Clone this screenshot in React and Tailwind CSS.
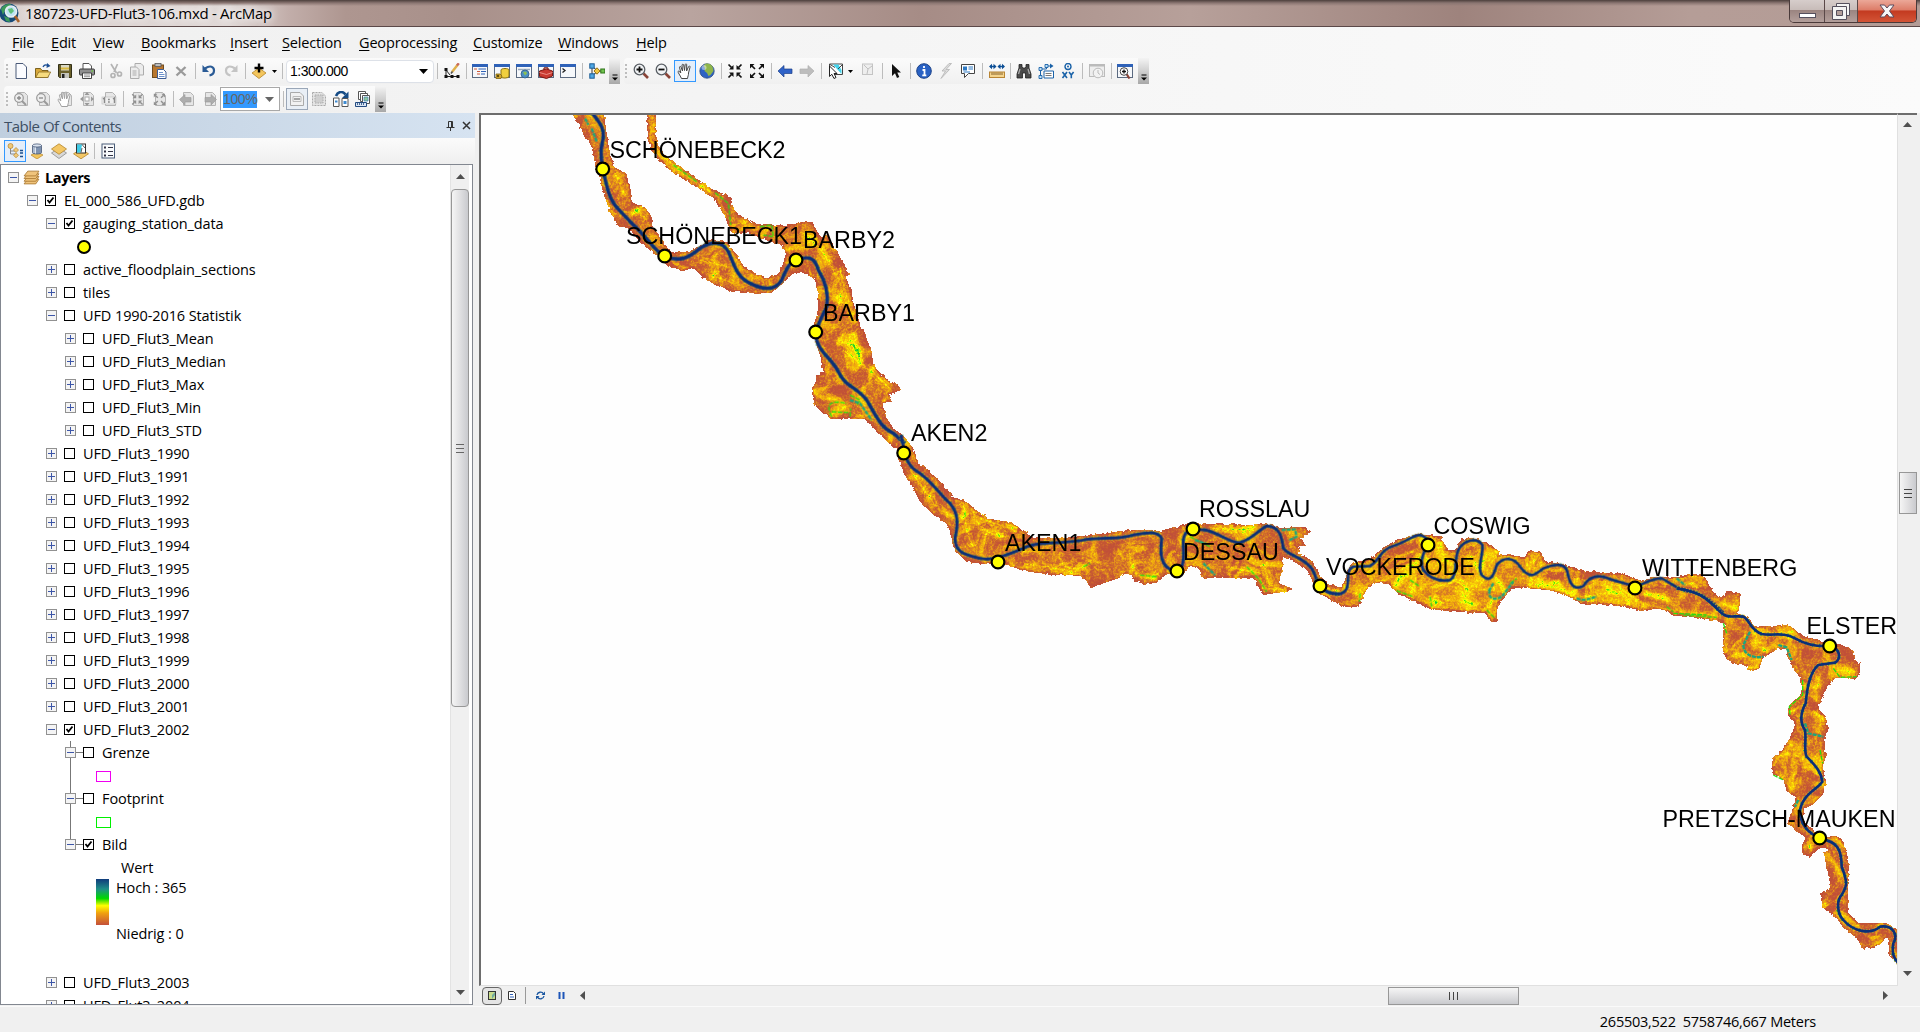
import React from "react";

/* ---------- toolbar icons (16 x 16 grid) ---------- */
const page = <path d="M3 .5h7l3.500 3.500v11.500H3z" fill="#fbfcff" stroke="#4a5a78" />;
const gpage = <path d="M4.500 1.500h7l3 3v10h-10z" fill="#e6e6e6" stroke="#b4b4b4" />;
const lens = (
  <>
    <path d="M10.500 10.500l4.500 4.500" stroke="#8a4438" strokeWidth="2.600" />
    <circle cx="6.500" cy="6.500" r="5.300" fill="#f2f4f6" stroke="#5b6066" strokeWidth="1.300" />
  </>
);
const glens = (
  <>
    {gpage}
    <path d="M9 10l4 4" stroke="#999" strokeWidth="2" />
    <circle cx="6" cy="7" r="4.300" fill="#eee" stroke="#999" strokeWidth="1.200" />
  </>
);
const win = (
  <>
    <rect x=".5" y="1.500" width="15" height="13" fill="#f6f8fb" stroke="#5b6a80" />
    <rect x="0" y="1" width="16" height="3" fill="#2f62b8" />
  </>
);
const arrowsIn = (c) => (
  <g stroke={c} fill={c} strokeWidth="1.700">
    <path d="M1.500 1.500l3 3M14.500 1.500l-3 3M1.500 14.500l3-3M14.500 14.500l-3-3" />
    <path d="M6.500 2V6.500H2zM9.500 2V6.500h4.500zM6.500 14V9.500H2zM9.500 14V9.500h4.500z" stroke="none" />
  </g>
);
const arrowsOut = (c) => (
  <g stroke={c} fill={c} strokeWidth="1.700">
    <path d="M3 3l3 3M13 3l-3 3M3 13l3-3M13 13l-3-3" />
    <path d="M1 5.500V1h4.500zM15 5.500V1h-4.500zM1 10.500v4.500h4.500zM15 10.500v4.500h-4.500z" stroke="none" />
  </g>
);
const hand = (c) => (
  <path
    d="M4.500 15.500C3 12 .8 9.500 1 8.500c.6-.8 1.600 0 2.800 1.500L2.500 4.200c.2-1 1.300-.9 1.600 0L5.500 8 5 2c.2-1 1.500-1 1.700 0l.8 5.500L8.200 1.500c.3-1 1.500-.8 1.500.2L9.600 8l2-4.500c.5-.9 1.700-.4 1.400.7L11.500 10c.2 2-.8 3.500-1 5.500z"
    fill="#fff"
    stroke={c}
  />
);
const globe = (
  <>
    <circle cx="8" cy="8" r="7.200" fill="#2e63c4" stroke="#2a4a80" strokeWidth=".8" />
    <path d="M6 1c3-1 6 0 7.500 2.500L14.500 8l-3 4-2 1L8 10 5.500 8 6 5 4.500 3z" fill="#8fb54a" />
    <circle cx="5" cy="4.500" r="2.500" fill="#fff" opacity=".45" />
  </>
);
const diamond = <path d="M8 5l7 5-7 5.500L1 10z" fill="#f3c55c" stroke="#b5852a" strokeWidth=".8" />;

const ICONS = {
  new: page,
  open: (
    <>
      <path d="M.5 14.500v-9h5l1.500 2h6v7z" fill="#d9a93c" stroke="#7d6320" />
      <path d="M.7 14.500l3-5.500h12l-3 5.500z" fill="#f8dc7e" stroke="#8a6c22" strokeWidth=".8" />
      <path d="M8 4c1-2 3-2.500 5-1.500" fill="none" stroke="#1a4d93" strokeWidth="1.300" />
      <path d="M12 0l3.500 3-4 2z" fill="#1a4d93" />
    </>
  ),
  save: (
    <>
      <path d="M1.500 1.500h13v13h-12l-1-1z" fill="#6a602a" stroke="#333018" />
      <rect x="4" y="2" width="8" height="5.500" fill="#d9d8c5" />
      <path d="M4 5.500h8" stroke="#d8b93e" strokeWidth="2" />
      <rect x="4" y="10" width="8" height="5" fill="#c4c4bc" />
      <rect x="5" y="11" width="2.500" height="4" fill="#222" />
    </>
  ),
  print: (
    <>
      <path d="M4 6V.5h6L12.500 3v3" fill="#fff" stroke="#555" />
      <rect x=".5" y="6" width="15" height="6" rx="1" fill="#8f8f8f" stroke="#3a3a3a" />
      <path d="M3.500 10h9v5.500h-9z" fill="#fff" stroke="#444" />
      <path d="M5 12h6M5 13.700h6" stroke="#777" strokeWidth=".8" />
      <circle cx="13.300" cy="8" r=".9" fill="#6ec04a" />
    </>
  ),
  cut: (
    <g stroke="#b4b4b4" fill="none" strokeWidth="1.700">
      <path d="M4 1l5.500 9M10.500 1L7 9" />
      <circle cx="6" cy="12.500" r="2" />
      <circle cx="12.500" cy="11" r="2" />
    </g>
  ),
  copy: (
    <g fill="#ececec" stroke="#acacac">
      <path d="M6 .5h6l2.500 2.500v9H6z" />
      <path d="M1.500 4h6L10 6.500v9H1.500z" />
      <path d="M3.500 8h4M3.500 10h4M3.500 12h4" />
    </g>
  ),
  paste: (
    <>
      <rect x="1.500" y="2" width="11" height="12.500" fill="#b8772f" stroke="#6f4b1d" />
      <rect x="4" y=".5" width="6" height="3" fill="#bbb" stroke="#555" strokeWidth=".8" />
      <path d="M6.500 6.500h6L15 9v6.500H6.500z" fill="#fff" stroke="#3d5d96" />
      <path d="M8 9.500h4M8 11.500h5.500M8 13.500h5.500" stroke="#5c86c7" strokeWidth=".9" />
    </>
  ),
  del: <path d="M3.500 4l9 8.500M12.500 4l-9 8.500" stroke="#9a9a9a" strokeWidth="2.400" />,
  undo: (
    <>
      <path d="M4 5.500C9 2 13 3.500 13 7.500c0 3-2.500 4.500-4.500 5" fill="none" stroke="#2a5b96" strokeWidth="2.200" />
      <path d="M1.500 2v7h6.500z" fill="#2a5b96" />
    </>
  ),
  redo: (
    <>
      <path d="M12 5.500C7 2 3 3.500 3 7.500c0 3 2.500 4.500 4.500 5" fill="none" stroke="#c4c4c4" strokeWidth="2.200" />
      <path d="M14.500 2v7H8z" fill="#c4c4c4" />
    </>
  ),
  add: (
    <>
      {diamond}
      <path d="M8 .5v9M3.500 5h9" stroke="#000" strokeWidth="2.400" />
    </>
  ),
  editor: (
    <>
      <path d="M2 7v6.500h12M2 7l4 5" stroke="#222" fill="none" />
      <path d="M.5 5h3v3h-3zM.5 12h3v3h-3zM6.500 12h3v3h-3zM12.500 12h3v3h-3z" fill="#111" />
      <path d="M8 9l5.500-7" stroke="#e0b04a" strokeWidth="2.500" />
      <path d="M13 2.500L14.800.3" stroke="#c96a5a" strokeWidth="2.500" />
      <path d="M7 10.500l1.500-2" stroke="#555" strokeWidth="1.500" />
    </>
  ),
  toc: (
    <>
      {win}
      <path d="M2 6h3M5 8.500h3M5 11h3" stroke="#d05a3a" strokeWidth="1.200" />
      <path d="M6.500 6H14M9 8.500h5M9 11h4" stroke="#2f62b8" strokeWidth="1.200" />
    </>
  ),
  catalog: (
    <>
      {win}
      <path d="M7 14V7c0-2 8-2 8 0v6.500c-1 2-7 2-8 .5z" fill="#f0cf3e" stroke="#8c7210" />
      <path d="M2 11h4l2 2-1 2.500H2z" fill="#d5a92e" stroke="#7c6210" strokeWidth=".8" />
      <circle cx="4" cy="13" r="1.200" fill="#5a480c" />
    </>
  ),
  search: (
    <>
      {win}
      <path d="M2 6.500h12" stroke="#9ab" strokeWidth="1.500" />
      <circle cx="9" cy="11" r="4" fill="#4d8fc4" stroke="#2b5a86" strokeWidth=".8" />
      <path d="M7 9l3-.5 1 2-2 2z" fill="#8cc152" />
    </>
  ),
  toolbox: (
    <>
      {win}
      <path d="M1.500 8l7-2 6 2v5l-6 2.500-7-2z" fill="#c93a30" stroke="#7a1812" />
      <path d="M5.500 6.500l1-1.700h3l1 1.500" fill="none" stroke="#7a1812" strokeWidth="1.200" />
      <path d="M1.500 9.500l7 2 6-2" fill="none" stroke="#f2a59c" strokeWidth=".8" />
    </>
  ),
  python: (
    <>
      {win}
      <path d="M2.500 5.500L5 7.500l-2.500 2" fill="none" stroke="#222" strokeWidth="1.300" />
    </>
  ),
  model: (
    <>
      <path d="M3 4v8M3 3.500l6 4.500-6 5" fill="none" stroke="#333" />
      <path d="M9 8h4" stroke="#333" />
      <rect x=".8" y=".8" width="4.400" height="4.400" fill="#4fa9e6" stroke="#1c5c94" />
      <rect x=".8" y="10.800" width="4.400" height="4.400" fill="#4fa9e6" stroke="#1c5c94" />
      <path d="M8 4.800L11 8l-3 3.200L5 8z" fill="#f2c63c" stroke="#9a7412" />
      <rect x="11.800" y="6" width="4" height="4" fill="#6fc24e" stroke="#2f7418" />
    </>
  ),
  zoomin: (
    <>
      {lens}
      <path d="M6.500 3.500v6M3.500 6.500h6" stroke="#111" strokeWidth="1.800" />
    </>
  ),
  zoomout: (
    <>
      {lens}
      <path d="M3.500 6.500h6" stroke="#111" strokeWidth="1.800" />
    </>
  ),
  pan: hand("#444"),
  globe,
  fixin: arrowsIn("#111"),
  fixout: arrowsOut("#111"),
  back: <path d="M1 8l6-5.500V6h8v4.500H7V14z" fill="#2f62c8" stroke="#1d3f88" strokeWidth=".7" />,
  fwd: <path d="M15 8L9 2.500V6H1v4.500h8V14z" fill="#bdbdbd" stroke="#b0b0b0" strokeWidth=".7" />,
  select: (
    <>
      <path d="M2.500 1h13v10.500h-13z" fill="#fff" stroke="#444" />
      <path d="M6 1.500l4 4.500 4.500 5V7l-3-5.500z" fill="#43d5ee" />
      <path d="M15 2l-4 4M3 1.500l5 3" stroke="#444" />
      <path d="M2.500 3v10.500l2.300-2.200L7 15.500l2-1-2-4h3z" fill="#fff" stroke="#222" />
    </>
  ),
  clear: (
    <>
      <rect x="2.500" y="1" width="10" height="10.500" fill="#eee" stroke="#c4c4c4" />
      <path d="M4 2l4 4 4-3M8 6l-1 5" stroke="#c0c0c0" fill="none" />
    </>
  ),
  arrow: <path d="M4 1v12l3-2.800L9 15l2.300-1-2-4.500H13z" fill="#111" />,
  info: (
    <>
      <circle cx="8" cy="8" r="7.300" fill="#2a62c4" stroke="#1c4288" />
      <path d="M8 3v2M6.500 7H8.500v5M6.300 12.300h4" stroke="#fff" strokeWidth="1.800" fill="none" />
    </>
  ),
  bolt: <path d="M11 .5L4 8h3.500L3 15.500l8.500-9H8L13.500.5z" fill="#dcdcdc" stroke="#b4b4b4" strokeWidth=".8" />,
  popup: (
    <>
      <path d="M1.500 1.500h13v9h-6l-4 4v-4h-3z" fill="#fff" stroke="#444" />
      <rect x="3" y="3.500" width="4" height="4" fill="#2f7ac4" />
      <path d="M8.500 4H13M8.500 6H13M3.500 9H10" stroke="#2f7ac4" />
    </>
  ),
  measure: (
    <>
      <path d="M1 3.500h5.500M9.500 3.500H15" stroke="#0d4f96" strokeWidth="1.500" />
      <path d="M0 3.500L3 .8v5.400zM7.500 3.500l-3-2.700v5.400zM8.500 3.500l3-2.700v5.400zM16 3.500l-3-2.700v5.400z" fill="#0d4f96" />
      <rect x=".5" y="9" width="15" height="5.500" fill="#f5d48c" stroke="#b98534" />
      <path d="M3 9.500v2.500M5 9.500v2.500M7 9.500v2.500M9 9.500v2.500M11 9.500v2.500M13 9.500v2.500" stroke="#6b4413" strokeWidth=".8" />
    </>
  ),
  find: (
    <>
      <path d="M3 1.500h3V4l1 1h2l1-1V1.500h3V5l2 6v4h-5.500v-5h-3v5H1v-4l2-6z" fill="#4a4a4a" stroke="#222" strokeWidth=".8" />
      <path d="M4 6l-1.500 5M12 6l1.500 5" stroke="#aaa" strokeWidth="1.300" />
    </>
  ),
  route: (
    <>
      <path d="M2.500 14V6h6V3h5" fill="none" stroke="#1a62a8" />
      <path d="M12 .5l3.500 2.500-3.500 2.500z" fill="#1a62a8" />
      <path d="M1 4.500h3v3H1zM1 12.500h3v3H1zM7 1.500h3v3H7z" fill="#bfe0f7" stroke="#1a62a8" strokeWidth=".9" />
      <path d="M6 8h9.500v7H6z" fill="#fff" stroke="#1a62a8" />
      <path d="M7.500 10.500h6M7.500 12.500h6" stroke="#777" />
    </>
  ),
  xy: (
    <>
      <circle cx="8" cy="3.500" r="3" fill="none" stroke="#1a62a8" strokeWidth="1.400" />
      <circle cx="8" cy="3.500" r="1" fill="#1a62a8" />
      <path d="M2.500 9l4.500 6M7 9l-4.500 6M9 9l2.300 3L13.600 9M11.300 12v3.300" stroke="#1a62a8" strokeWidth="1.600" fill="none" />
    </>
  ),
  time: (
    <>
      <rect x=".5" y="1.500" width="15" height="12" fill="#eee" stroke="#bbb" />
      <path d="M0 2.500h16" stroke="#bbb" strokeWidth="2" />
      <circle cx="9" cy="10" r="4.800" fill="#f2f2f2" stroke="#bbb" />
      <path d="M9 7v3l2 1.500" stroke="#bbb" fill="none" />
    </>
  ),
  viewer: (
    <>
      {win}
      <path d="M9.500 11l3 4.500" stroke="#8a4438" strokeWidth="2.200" />
      <circle cx="7" cy="8.500" r="3.800" fill="#fff" stroke="#444" />
      <path d="M7 6.500v4M5 8.500h4" stroke="#111" strokeWidth="1.300" />
    </>
  ),
  gzin: (
    <>
      {glens}
      <path d="M6 5v4M4 7h4" stroke="#888" strokeWidth="1.300" />
    </>
  ),
  gzout: (
    <>
      {glens}
      <path d="M4 7h4" stroke="#888" strokeWidth="1.300" />
    </>
  ),
  gpan: (
    <>
      {gpage}
      {hand("#a0a0a0")}
    </>
  ),
  gfull: (
    <>
      {gpage}
      <path d="M8 1l2.500 3h-5zM8 15l2.500-3h-5zM1 8l3-2.500v5zM15 8l-3-2.500v5z" fill="#999" />
      <rect x="6" y="6" width="4" height="4" fill="#fff" stroke="#aaa" />
    </>
  ),
  g11: (
    <>
      {gpage}
      <rect x="1" y="6" width="14" height="7" fill="#eee" stroke="#bbb" strokeWidth=".6" />
      <path d="M2 8l1.500-1v5M12 8l1.500-1v5" stroke="#8a8a8a" fill="none" strokeWidth="1.500" />
      <path d="M7 8.500h1.800M7 11h1.800" stroke="#8a8a8a" strokeWidth="1.500" />
    </>
  ),
  gin: (
    <>
      {gpage}
      <g transform="translate(2 2) scale(.8)">{arrowsIn("#909090")}</g>
    </>
  ),
  gout: (
    <>
      {gpage}
      <g transform="translate(2 2) scale(.8)">{arrowsOut("#909090")}</g>
    </>
  ),
  gback: (
    <>
      {gpage}
      <path d="M.5 8.500l5.500-5V6.500h6v4.500H6v3z" fill="#adadad" stroke="#999" strokeWidth=".6" />
    </>
  ),
  gfwd: (
    <>
      {gpage}
      <path d="M15.500 8.500l-5.500-5V6.500H4v4.500h6v3z" fill="#adadad" stroke="#999" strokeWidth=".6" />
    </>
  ),
  draft: (
    <>
      <path d="M1.500 1.500h9.500l3.500 3.500v9.500h-13z" fill="#f1f1f1" stroke="#aaa" />
      <path d="M4 5.500h8v5H4z" fill="none" stroke="#bbb" />
      <path d="M5 8h6" stroke="#888" strokeWidth="1.500" />
    </>
  ),
  focus: (
    <>
      <path d="M1.500 1.500h9.500l3.500 3.500v9.500h-13z" fill="#e4e4e4" stroke="#aaa" strokeDasharray="2 1" />
      <path d="M4 4h8v8H4z" fill="#cfcfcf" stroke="#aaa" strokeDasharray="1.500 1" />
    </>
  ),
  layout: (
    <>
      <path d="M3 5C5 0 10 0 12.500 3.500" fill="none" stroke="#164c86" strokeWidth="2.600" />
      <path d="M15.500.5v6.500H9z" fill="#164c86" />
      <path d="M.5 7h5.500v8.500H.5zM9 7.500h6v8H9z" fill="#fff" stroke="#555" />
      <path d="M2 9.500h2.500v2H2z" fill="#3f8bd0" />
      <path d="M10.500 10h3v3h-3z" fill="#3f8bd0" />
    </>
  ),
  ddp: (
    <>
      <path d="M3.500.5h7v8h-7z" fill="#fff" stroke="#555" />
      <path d="M5.500 2.500h7v8h-7z" fill="#fff" stroke="#555" />
      <path d="M7.500 4.500h7v8h-7z" fill="#fff" stroke="#555" />
      <path d="M9 6h4v4H9z" fill="#8ec79b" stroke="#3f7fb0" strokeWidth=".7" />
      <path d="M.5 11.500h11v4H.5z" fill="#d9e4f2" stroke="#234a80" />
      <path d="M2.500 12v2M4.500 12v2M6.500 12v2M8.500 12v2" stroke="#234a80" strokeWidth=".8" />
    </>
  ),
  tOrder: (
    <>
      <path d="M3.500 4v7h6M3.500 8h5" fill="none" stroke="#888" />
      <circle cx="3.500" cy="3" r="2.500" fill="#f0c878" stroke="#b5852a" strokeWidth=".7" />
      <path d="M9 4.500L11.500 7 9 9.500 6.500 7zM9 9.800l2.500 2.500L9 14.800l-2.500-2.500z" fill="#f0c878" stroke="#b5852a" strokeWidth=".7" />
      <path d="M13 7.500h3M13 10h3M13 13.500h3" stroke="#1d4f8c" strokeWidth="1.400" />
    </>
  ),
  tSource: (
    <>
      <path d="M8 9l6 3-6 4-6-4z" fill="#f3c55c" stroke="#b5852a" strokeWidth=".7" />
      <path d="M3.500 2.500v7c0 2 9 2 9 0v-7z" fill="#7f93b0" stroke="#4a5b78" strokeWidth=".8" />
      <path d="M5 4v6M6.500 4v6.500" stroke="#dfe7f2" />
      <ellipse cx="8" cy="2.500" rx="4.500" ry="1.600" fill="#dbe4f0" stroke="#4a5b78" strokeWidth=".8" />
    </>
  ),
  tVis: (
    <>
      <path d="M8 5l7.500 5L8 15.500.5 10z" fill="#d8d8d8" stroke="#8a8a8a" strokeWidth=".8" />
      <path d="M8 .8L15.500 6 8 11.300.5 6z" fill="#f4c765" stroke="#b5852a" strokeWidth=".8" />
    </>
  ),
  tSel: (
    <>
      <path d="M8 6l7.500 4.800L8 15.800.5 10.800z" fill="#f4c765" stroke="#b5852a" strokeWidth=".8" />
      <rect x="3.500" y="1" width="9" height="9" fill="#fff" stroke="#333" />
      <path d="M4 1.500h5L7.500 9.500H4z" fill="#3ecbe6" />
      <path d="M9 1.500l3 3.500M9 5l-1 4.500" stroke="#333" strokeWidth=".8" />
    </>
  ),
  tOpt: (
    <>
      <rect x="2" y="1" width="12.500" height="14" fill="#f8fafc" stroke="#4a5d78" />
      <path d="M8 4.500h5M8 8.500h5M8 12.500h5" stroke="#334" strokeWidth="1.200" />
      <path d="M4 3.500h2v2H4zM4 7.500h2v2H4zM4 11.500h2v2H4z" fill="#334" />
    </>
  ),
  layers: (
    <g fill="#f0c47c" stroke="#a9772f" strokeWidth=".8">
      <path d="M1 14l3.500-4.500H15L12 14z" />
      <path d="M1 11.500L4.500 7H15l-3 4.500z" />
      <path d="M1 9l3.500-4.500H15L12 9z" />
      <path d="M1 6.500L4.500 2H15l-3 4.500z" />
    </g>
  ),
};

const Svg = ({ name, className = "h-4 w-4" }) => (
  <svg viewBox="0 0 16 16" className={className}>
    {ICONS[name]}
  </svg>
);

const Icon = ({ name, active, framed }) => (
  <div
    className={
      "flex h-[22px] w-[22px] shrink-0 items-center justify-center " +
      (active ? "border border-[#3399ff] bg-[#e4eefa]" : framed ? "border border-[#9aa7b8] bg-[#e9eff6]" : "")
    }
  >
    <Svg name={name} className="h-4 w-4 shrink-0" />
  </div>
);

const SEP_W = { 5: "w-[5px]", 6: "w-[6px]", 7: "w-[7px]" };
const Sep = ({ w = 6 }) => (
  <div className={"flex shrink-0 justify-center " + SEP_W[w]}>
    <div className="h-4 w-px bg-[#bcbcbc]" />
  </div>
);
const Grip = ({ className }) => (
  <div className={"flex shrink-0 flex-col gap-[2px] " + className}>
    {[0, 1, 2, 3].map((i) => (
      <div key={i} className="h-[2px] w-[2px] bg-[#bdbdbd]" />
    ))}
  </div>
);
const Drop = () => (
  <div className="flex w-[9px] shrink-0 justify-center">
    <svg viewBox="0 0 5 3" className="h-[3px] w-[5px]">
      <path d="M0 0h5L2.500 3z" fill="#000" />
    </svg>
  </div>
);
const Overflow = () => (
  <div className="ml-px flex h-[26px] w-[11px] shrink-0 items-end justify-center bg-gradient-to-b from-[#f4f4f4] via-[#d0d0d0] to-[#a8a8a8] pb-[3px]">
    <svg viewBox="0 0 6 7" className="h-[7px] w-[6px]">
      <path d="M.5 1h5" stroke="#000" />
      <path d="M0 3.500h6L3 6.500z" fill="#000" />
    </svg>
  </div>
);
const Icons = ({ names }) => names.split(" ").map((n) => <Icon key={n} name={n} />);

/* ---------- window frame ---------- */
function TitleBar() {
  return (
    <div className="flex h-[27px] shrink-0 items-start justify-between border-b border-[#5b4848] bg-[linear-gradient(180deg,#4c3f3c_0px,#8b7672_3px,transparent_6px),linear-gradient(90deg,#dcd3d1_0%,#e0d8d6_12%,#c2aeaa_15%,#ae9690_18%,#a8908a_24%,#b9a49f_36%,#a68c86_48%,#b7a09a_62%,#9e837d_76%,#b59d97_88%,#b39c96_100%)]">
      <div className="flex h-[26px] items-center gap-[5px]">
        <svg viewBox="0 0 20 22" className="h-[22px] w-5">
          <circle cx="9" cy="11" r="9.500" fill="#174a78" />
          <path d="M1 7c2-4 6-5.500 10-5l-2 4-4 2-2 5zM4 14l5 2 1 4-4-1z" fill="#3d9a5a" />
          <circle cx="11" cy="9.500" r="5.500" fill="#bfe4f4" stroke="#e8eef2" strokeWidth="1.600" />
          <path d="M8 7l4-1 2 3-3 3-2-2z" fill="#5fbf7a" />
          <path d="M15 14l4 6" stroke="#a8632c" strokeWidth="2.600" />
        </svg>
        <span className="text-[15px] leading-none tracking-[-0.31px] text-black [text-shadow:0_0_8px_#fff,0_0_10px_#fff]">
          180723-UFD-Flut3-106.mxd - ArcMap
        </span>
      </div>
      <div className="mr-[3px] flex h-[23px] w-[128px] overflow-hidden rounded-b-[5px] border border-t-0 border-[#4a3a3a]">
        <div className="flex w-[35px] items-end justify-center border-r border-[#5a4848] bg-[linear-gradient(180deg,#d6cdcb_0%,#c8bcb9_44%,#9a8480_46%,#b39f9b_100%)] pb-[4px]">
          <div className="h-[5px] w-[17px] border border-[#55505e] bg-white" />
        </div>
        <div className="flex w-[33px] items-center justify-center border-r border-[#5a4848] bg-[linear-gradient(180deg,#d6cdcb_0%,#c8bcb9_44%,#9a8480_46%,#b39f9b_100%)]">
          <svg viewBox="0 0 18 17" className="h-[17px] w-[18px]">
            <path d="M4.500.5h13v12h-13z" fill="#f4f4f4" stroke="#55505e" />
            <path d="M.5 3.500h14v13H.5z" fill="#f4f4f4" stroke="#55505e" />
            <path d="M4.500 7.500h6v5h-6z" fill="#b39f9b" stroke="#55505e" />
          </svg>
        </div>
        <div className="flex flex-1 items-center justify-center bg-[linear-gradient(180deg,#eba898_0%,#dd7c68_45%,#c33a20_50%,#d35436_100%)]">
          <svg viewBox="0 0 16 14" className="h-[14px] w-4">
            <path d="M1 1h4.500L8 4l2.500-3H15l-4.500 6L15 13h-4.500L8 10l-2.500 3H1l4.500-6z" fill="#f6f6f6" stroke="#5b4a5c" />
          </svg>
        </div>
      </div>
    </div>
  );
}

const MENUS = [
  ["File", "w-[39px]"],
  ["Edit", "w-[42px]"],
  ["View", "w-[48px]"],
  ["Bookmarks", "w-[89px]"],
  ["Insert", "w-[52px]"],
  ["Selection", "w-[77px]"],
  ["Geoprocessing", "w-[114px]"],
  ["Customize", "w-[85px]"],
  ["Windows", "w-[78px]"],
  ["Help", "w-[50px]"],
];

function Toolbars() {
  return (
    <div className="shrink-0 bg-gradient-to-r from-[#f0f0f0] to-[#fbfbfb]">
      <div className="flex h-[31px] items-center pl-3 text-[14.500px] tracking-[-0.16px]">
        {MENUS.map(([m, w]) => (
          <span key={m} className={"shrink-0 whitespace-nowrap " + w}>
            <span className="underline decoration-1 underline-offset-2">{m[0]}</span>
            {m.slice(1)}
          </span>
        ))}
      </div>
      <div className="flex h-[26px]">
        <div className="ml-1 flex items-center rounded bg-gradient-to-b from-[#fbfbfb] to-[#f0f0f0]">
          <Grip className="w-[6px] pl-[2px]" />
          <Icons names="new open save print" />
          <Sep />
          <Icons names="cut copy paste del" />
          <Sep w={6} />
          <Icons names="undo redo" />
          <Sep w={6} />
          <Icon name="add" />
          <Drop />
          <Sep />
          <div className="ml-px flex h-[23px] w-[148px] items-center justify-between rounded-sm border border-[#dde1e8] bg-white pl-[3px] pr-[5px] font-['Liberation_Sans',sans-serif] text-[14px] tracking-[-0.5px]">
            <span>1:300.000</span>
            <svg viewBox="0 0 9 5" className="h-[5px] w-[9px]">
              <path d="M0 0h9L4.500 5z" fill="#000" />
            </svg>
          </div>
          <Sep w={7} />
          <Icon name="editor" />
          <Sep />
          <Icons names="toc catalog search toolbox python" />
          <Sep w={7} />
          <Icon name="model" />
          <Overflow />
        </div>
        <div className="ml-1 flex items-center rounded bg-gradient-to-b from-[#fbfbfb] to-[#f0f0f0]">
          <Grip className="w-[6px] pl-[1px]" />
          <Icons names="zoomin zoomout" />
          <Icon name="pan" active />
          <Icon name="globe" />
          <Sep w={6} />
          <Icons names="fixin fixout" />
          <Sep />
          <Icons names="back fwd" />
          <Sep />
          <Icon name="select" />
          <Drop />
          <div className="ml-[2px] flex items-center">
            <Icon name="clear" />
          </div>
          <Sep w={6} />
          <Icon name="arrow" />
          <Sep w={6} />
          <Icons names="info bolt popup" />
          <Sep w={7} />
          <Icon name="measure" />
          <Sep w={5} />
          <Icons names="find route xy" />
          <Sep w={7} />
          <Icon name="time" />
          <Sep w={6} />
          <Icon name="viewer" />
          <div className="pl-px">
            <Overflow />
          </div>
        </div>
      </div>
      <div className="flex h-[29px] items-start pl-1 pt-[2px]">
        <div className="flex h-[26px] items-center rounded bg-gradient-to-b from-[#fbfbfb] to-[#f0f0f0]">
          <Grip className="w-[6px] pl-[2px]" />
          <Icons names="gzin gzout gpan gfull g11" />
          <Sep w={6} />
          <Icons names="gin gout" />
          <Sep />
          <Icons names="gback gfwd" />
          <div className="flex h-[24px] w-[60px] items-center justify-between border border-[#a8a8a8] bg-white pl-[2px] pr-[5px] font-['Liberation_Sans',sans-serif] text-[14px]">
            <span className="bg-[#3399ff] leading-[17px] tracking-[-0.4px] text-[#666]">100%</span>
            <svg viewBox="0 0 9 5" className="h-[5px] w-[9px]">
              <path d="M0 0h9L4.500 5z" fill="#666" />
            </svg>
          </div>
          <Sep w={6} />
          <Icon name="draft" framed />
          <Icons names="focus layout ddp" />
          <Overflow />
        </div>
      </div>
    </div>
  );
}

/* ---------- table of contents ---------- */
const Expander = ({ open }) => (
  <svg viewBox="0 0 11 11" className="mr-[7px] h-[11px] w-[11px] shrink-0">
    <rect x=".5" y=".5" width="10" height="10" fill="#f4f4f4" stroke="#919191" />
    <path d={open ? "M2 5.500h7" : "M2 5.500h7M5.500 2v7"} stroke="#3d56a8" />
  </svg>
);
const Check = ({ on }) => (
  <svg viewBox="0 0 11 11" className="mr-2 h-[11px] w-[11px] shrink-0">
    <rect x=".5" y=".5" width="10" height="10" fill="#fff" stroke="#000" />
    {on && <path d="M2.500 5l2 2.500 4-5" fill="none" stroke="#000" strokeWidth="1.800" />}
  </svg>
);
const INDENT = ["pl-[7px]", "pl-[26px]", "pl-[45px]", "pl-[64px]"];
const Row = ({ lvl, open, on, label }) => (
  <div className={"flex h-[23px] shrink-0 items-center " + INDENT[lvl]}>
    <Expander open={open} />
    <Check on={on} />
    <span className="whitespace-nowrap">{label}</span>
  </div>
);
/* Sub-layer row with the connector lines running through the expander column */
const SubRow = ({ on, label, last }) => (
  <div className="flex h-[23px] shrink-0 items-center pl-[64px]">
    <svg viewBox="0 0 18 23" className="h-[23px] w-[18px] shrink-0">
      <path d={last ? "M5.500 0v11M11 11.500h7" : "M5.500 0v23M11 11.500h7"} stroke="#777" />
      <rect x=".5" y="6.500" width="10" height="10" fill="#f4f4f4" stroke="#919191" />
      <path d="M2 11.500h7" stroke="#3d56a8" />
    </svg>
    <Check on={on} />
    <span>{label}</span>
  </div>
);
const Swatch = ({ className }) => (
  <div className="flex h-[23px] shrink-0 items-center pl-[69px]">
    <div className="h-[23px] w-px bg-[#777]" />
    <div className={"ml-[25px] mt-[2px] h-[11px] w-[15px] border " + className} />
  </div>
);
const YEARS = [1990, 1991, 1992, 1993, 1994, 1995, 1996, 1997, 1998, 1999, 2000, 2001];

const Tri = ({ dir, className = "" }) => {
  const d = { up: "M0 6h9L4.500 1z", down: "M0 1h9L4.500 6z", left: "M7 0v9L2 4.500z", right: "M2 0v9l5-4.500z" }[dir];
  return (
    <svg viewBox="0 0 9 9" className={"h-[9px] w-[9px] shrink-0 " + className}>
      <path d={d} fill="#505050" />
    </svg>
  );
};

function Contents() {
  return (
    <div className="flex w-[475px] shrink-0 flex-col">
      <div className="flex h-[25px] shrink-0 items-center justify-between bg-gradient-to-r from-[#c0cfdf] to-[#d6e3f1] pl-1 pr-1 pt-[2px] text-[15px] text-[#3d4f63]">
        <span className="tracking-[-0.5px]">Table Of Contents</span>
        <div className="flex items-center gap-[7px] pb-[2px]">
          <svg viewBox="0 0 9 10" className="h-[10px] w-[9px]">
            <path d="M2.500 6V.5h4V6M5.500 1v5M.5 6.500h8M4.500 7v3" fill="none" stroke="#333" />
          </svg>
          <svg viewBox="0 0 9 9" className="h-[9px] w-[9px]">
            <path d="M1 1l7 7M8 1L1 8" stroke="#333" strokeWidth="1.500" />
          </svg>
        </div>
      </div>
      <div className="flex h-[26px] shrink-0 items-center bg-gradient-to-b from-[#fbfbfb] to-[#efefef] pl-1">
        <Icon name="tOrder" active />
        <Icons names="tSource tVis tSel" />
        <Sep w={5} />
        <Icon name="tOpt" />
      </div>
      <div className="mb-[1px] flex min-h-0 w-[473px] flex-1 border border-[#828790] bg-white">
        <div className="flex min-w-0 flex-1 flex-col overflow-hidden pt-px text-[14.500px] tracking-[-0.1px]">
          <div className="flex h-[23px] shrink-0 items-center pl-[7px]">
            <Expander open />
            <Svg name="layers" className="-ml-[3px] mr-[5px] h-[17px] w-[17px]" />
            <span className="font-bold tracking-[-0.4px]">Layers</span>
          </div>
          <Row lvl={1} open on label="EL_000_586_UFD.gdb" />
          <Row lvl={2} open on label="gauging_station_data" />
          <div className="flex h-[23px] shrink-0 items-center pl-[76px]">
            <div className="h-[14px] w-[14px] rounded-full border-2 border-black bg-[#ffff00]" />
          </div>
          <Row lvl={2} label="active_floodplain_sections" />
          <Row lvl={2} label="tiles" />
          <Row lvl={2} open label="UFD 1990-2016 Statistik" />
          {["Mean", "Median", "Max", "Min", "STD"].map((s) => (
            <Row key={s} lvl={3} label={"UFD_Flut3_" + s} />
          ))}
          {YEARS.map((y) => (
            <Row key={y} lvl={2} label={"UFD_Flut3_" + y} />
          ))}
          <Row lvl={2} open on label="UFD_Flut3_2002" />
          <SubRow label="Grenze" />
          <Swatch className="border-[#f000f0]" />
          <SubRow label="Footprint" />
          <Swatch className="border-[#00f000]" />
          <SubRow on last label="Bild" />
          <div className="flex h-[23px] shrink-0 items-center pl-[120px]">Wert</div>
          <div className="flex h-[92px] shrink-0 pl-[95px]">
            <div className="h-[46px] w-[13px] bg-[linear-gradient(180deg,#103c7c_0%,#1f8f88_22%,#00d800_42%,#ffff00_58%,#f0a010_74%,#c4503a_100%)]" />
            <div className="ml-[7px] flex flex-col gap-[23px]">
              <span className="leading-[18px]">Hoch : 365</span>
              <span className="mt-[5px] leading-[18px]">Niedrig : 0</span>
            </div>
          </div>
          <Row lvl={2} label="UFD_Flut3_2003" />
          <Row lvl={2} label="UFD_Flut3_2004" />
        </div>
        <div className="mr-[3px] flex w-[19px] shrink-0 flex-col items-center border-l border-[#e3e3e3] bg-[#f0f0f0]">
          <div className="flex h-[24px] items-center">
            <Tri dir="up" />
          </div>
          <div className="flex h-[518px] w-[18px] flex-col items-center justify-center gap-[3px] rounded-sm border border-[#979797] bg-gradient-to-r from-[#f5f5f5] via-[#e0e0e2] to-[#c9cace]">
            <div className="h-px w-2 bg-[#666]" />
            <div className="h-px w-2 bg-[#666]" />
            <div className="h-px w-2 bg-[#666]" />
          </div>
          <div className="mt-auto flex h-[22px] items-center">
            <Tri dir="down" />
          </div>
        </div>
      </div>
    </div>
  );
}

/* ---------- map ---------- */
/* Each section is digitised on its own grid: three units per map pixel.
   `tone` is the base level of the raster there; `low` marks rarely flooded ground. */
const SECTIONS = [
  {
    t: "translate(560 110) scale(.33333)",
    tone: "#2c2c2c",
    w: 10.5,
    land:
      "38,10 60,45 75,75 95,105 105,145 120,195 130,240 150,300 178,350 200,348 225,375 260,410 300,440 320,462 365,482 400,472 430,500 470,525 515,543 575,548 635,546 665,520 695,490 730,485 765,505 775,540 778,600 765,640 770,700 785,745 793,785 775,805 757,840 765,880 785,905 820,925 865,922 915,925 935,945 970,980 1000,1010 1040,1010 1025,975 1000,960 975,920 965,880 990,870 985,850 1020,840 1005,822 985,815 940,770 930,715 900,650 885,600 870,540 850,490 825,440 800,400 775,375 755,337 720,340 680,350 630,345 590,345 550,325 520,305 510,265 495,255 460,243 420,215 370,180 320,145 290,110 285,60 285,10 265,10 263,80 280,125 320,170 370,205 430,240 460,262 480,290 500,325 515,365 560,365 600,380 640,395 665,400 680,430 668,470 655,495 620,505 580,490 545,465 525,430 500,400 455,390 420,410 385,428 335,430 305,395 275,350 272,320 255,295 215,280 210,240 195,190 165,175 150,140 140,90 130,10",
    river:
      "M98,10 C115,35 132,50 130,80 L123,120 C123,160 130,190 145,245 C160,290 175,295 215,340 C265,385 280,420 315,440 C360,455 385,445 420,415 C450,395 485,390 505,425 C525,470 530,500 570,520 C620,545 650,535 665,510 C680,475 690,455 708,450 C750,435 765,445 775,480 C800,520 805,560 800,590 C785,625 765,650 770,690 C780,730 815,745 835,785 C855,830 890,830 920,870 C950,920 960,950 1000,970 L1035,1000",
    bright:
      "M275,20 L272,90 C320,160 380,200 450,245 M165,190 C190,230 180,250 200,260 M225,300 L260,330 M720,365 C760,390 790,420 820,480 C850,520 850,560 830,600 M840,470 C850,540 870,580 885,640 M830,700 C880,690 900,720 900,760 M850,720 L940,790 L985,830 M420,450 L500,470 M440,490 L520,520",
    low: "M60,20 L110,100 L120,190 M140,230 L190,345 M330,465 L400,440 M770,840 L860,840 M780,790 L790,880 M490,270 L540,340 M790,380 L860,500 M900,660 L925,760",
    green:
      "M340,165 L410,215 M465,248 L505,280 L512,345 M600,350 L635,345 L640,380 L610,375 M815,920 C795,880 810,870 860,880 M870,920 L872,895 M870,855 L900,870 L890,885 M815,905 L870,908",
    teal: "M75,25 L85,45 M95,55 L110,95 M870,870 L900,880 L935,930",
  },
  {
    t: "translate(900 420) scale(.33333)",
    tone: "#282828",
    w: 9,
    land:
      "-5,40 15,55 40,90 55,135 95,170 150,235 190,240 230,275 270,300 330,308 365,330 400,355 480,358 590,345 690,332 780,335 860,315 905,315 960,312 1040,318 1100,312 1140,325 1215,322 1228,335 1200,355 1215,375 1190,378 1190,400 1235,425 1260,470 1285,495 1325,505 1325,548 1270,518 1240,485 1225,450 1170,415 1145,410 1148,440 1140,460 1135,490 1170,508 1140,515 1090,522 1080,505 1060,470 905,470 900,445 870,435 850,460 800,460 770,485 730,492 700,475 685,455 650,475 600,490 575,502 562,485 540,465 450,462 370,450 340,440 300,425 250,430 200,422 165,390 150,330 145,315 100,280 60,240 40,200 15,160 -5,110",
    river:
      "M3,45 C15,110 20,130 45,150 C90,175 120,225 150,250 C175,280 175,310 165,355 C165,400 200,405 240,415 C280,425 330,400 370,385 C420,360 490,375 560,358 C620,350 650,360 700,345 C750,335 775,335 785,355 C780,400 780,440 820,452 C850,450 852,430 850,380 C845,330 870,325 915,330 C960,340 990,370 1020,368 C1060,355 1075,330 1100,318 C1140,320 1145,350 1150,385 C1170,410 1200,405 1235,445 C1250,470 1250,490 1262,500 C1280,520 1300,522 1325,522",
    bright:
      "M190,250 C200,290 190,330 220,380 M220,275 C230,320 270,350 320,350 M240,290 C280,320 330,315 350,335 M30,150 L110,260 M480,395 C470,440 530,470 570,420 M690,400 C690,470 750,485 775,460 M695,430 C700,475 750,480 770,470 M370,430 L520,455 M930,325 L1060,330 M980,440 L1080,460 M1090,430 L1110,500 M1085,505 L1160,508 M360,400 L420,390",
    low: "M60,140 L150,235 M590,400 L680,370 M700,370 L770,360 M720,400 L750,430 M800,350 L850,330 M800,400 L840,390 M900,450 L950,460 M1160,345 L1190,400 M1000,460 L1020,400 M570,490 L620,470",
    green: "M1040,440 L1075,475 L1100,515 M720,465 L770,470 M870,350 L930,380 M550,440 L570,430",
    teal: "M1145,330 L1185,328 L1190,350 L1165,362 M885,360 L920,372 M910,430 L945,465",
  },
  {
    t: "translate(1280 500) scale(.33333)",
    tone: "#525252",
    w: 8,
    land:
      "150,262 180,268 198,240 205,215 220,190 270,180 310,145 350,122 415,103 480,112 500,150 525,155 545,120 580,115 620,130 655,155 655,168 690,165 735,175 745,155 780,155 790,185 850,195 890,210 940,228 1020,220 1060,235 1085,245 1130,232 1190,235 1225,225 1260,225 1280,245 1290,270 1330,300 1330,362 1250,352 1190,345 1140,320 1090,332 1040,318 960,310 900,308 860,285 810,268 740,262 700,260 670,290 650,320 648,360 635,362 615,335 560,335 450,325 400,300 355,280 325,248 280,245 250,275 235,318 190,318 150,295 110,275 120,250",
    river:
      "M105,240 L120,262 C150,285 190,290 200,265 C210,240 195,210 220,200 L270,198 C300,180 300,150 340,138 C380,125 400,105 420,105 C445,115 445,120 440,140 C425,170 420,190 430,210 C450,235 480,245 510,240 C535,225 520,185 535,150 C550,120 590,110 607,135 C610,170 590,200 605,225 C630,250 640,230 650,195 C670,170 700,170 720,200 C750,240 765,225 790,205 C830,190 855,190 862,215 C870,260 885,270 910,258 C930,225 960,225 985,235 C1010,245 1040,250 1064,260 C1090,255 1110,235 1145,235 C1175,250 1200,275 1240,275 C1280,290 1300,310 1330,338",
    bright:
      "M470,130 C480,170 470,190 500,220 M480,125 L490,170 M240,300 C250,250 280,240 330,240 M350,230 L440,300 L560,320 M380,270 L460,310 M420,250 L600,270 M460,290 L600,315 M540,330 L620,300 M570,150 C560,200 550,230 570,290 M620,320 L640,350 M640,150 L630,200 M680,230 L840,250 M740,250 L860,265 M900,290 L1060,270 M960,300 L1100,300 M1090,280 L1200,320 M1180,335 L1320,345 M1230,235 L1280,300 M760,165 L765,190",
    low: "M150,285 L200,295 M220,230 L200,300 M230,205 L260,250 M300,200 L330,160 L410,130 M310,210 L400,170 M560,160 L590,150 M800,225 L850,230 M880,220 L1020,235 M900,280 L930,270 M1210,325 L1240,315 M1130,260 L1170,270",
    green:
      "M390,240 L420,260 M350,272 L400,290 M620,330 L645,355 M690,250 L710,235 M450,290 L455,320 M240,280 L238,305 M1210,345 L1310,352 M1160,320 L1180,335",
    teal: "M630,270 C620,290 640,305 665,290 L700,245 M640,250 L625,275 M890,295 C910,305 930,295 950,290 M1190,235 L1215,255",
  },
  {
    t: "translate(1640 590) scale(.33333)",
    tone: "#323232",
    w: 8,
    land:
      "120,-5 0,-5 0,60 60,50 100,72 180,78 220,80 258,100 250,140 258,200 280,220 310,218 330,238 355,235 365,205 410,175 440,175 450,215 480,260 490,310 450,345 445,375 468,400 455,440 430,480 405,500 397,545 435,570 440,600 470,620 458,660 445,700 475,725 500,740 487,770 490,790 510,798 530,775 555,770 575,780 580,830 572,900 545,910 548,950 590,980 610,1010 650,1040 670,1075 715,1065 745,1035 750,1095 780,1122 780,1025 735,1000 690,1003 650,1000 620,965 620,900 625,850 620,790 605,750 585,738 555,745 510,715 485,690 490,655 520,640 552,605 555,570 545,530 555,500 550,450 562,410 550,375 530,360 540,330 560,290 580,265 600,260 650,265 658,240 658,220 640,210 640,185 600,165 550,155 490,140 450,110 420,105 400,112 340,110 325,85 290,70 298,40 298,10 265,5 240,30 210,-5",
    river:
      "M110,-5 C180,5 200,25 235,60 C260,90 280,75 310,80 C330,90 330,120 365,132 C400,138 430,125 465,145 C500,165 540,170 570,168 C600,175 605,205 585,218 L535,225 C505,250 500,310 497,340 C480,370 480,400 495,420 C500,450 490,480 500,500 C530,530 545,550 547,575 C530,600 490,610 480,660 C480,710 510,730 540,745 C590,755 605,775 605,830 C625,880 620,890 605,915 C590,930 590,970 610,990 C640,1025 690,1035 720,1010 C760,1005 775,1035 760,1060 C755,1090 760,1105 780,1125",
    bright:
      "M10,40 L90,60 L220,75 M10,10 L120,40 M250,40 L290,55 M345,125 C400,130 440,120 460,150 M330,150 C350,200 390,180 430,160 M540,260 C530,290 520,310 535,330 M520,375 C540,370 550,400 535,430 M400,530 C410,480 470,490 490,510 M405,545 C440,570 460,590 450,610 M455,450 L440,490 M590,240 L655,245 M460,350 L450,370 M490,770 L520,760 M320,235 L355,232 M260,110 L255,190",
    low: "M280,130 L310,140 M470,190 L560,195 M600,175 L640,205 M460,530 L530,570 M500,460 L520,500 M500,600 L540,610 M510,350 L535,350 M560,780 L600,960 M560,910 L580,960 M590,800 L600,900 M620,1000 L680,1060 M660,1030 L740,1020 M610,790 L612,850 M460,680 L480,700 M770,1040 L770,1100",
    green: "M250,100 L260,130 M488,270 L488,315 L448,350 L450,375 M400,555 L430,570 M540,480 L548,520 M580,235 L600,262 L650,260 M590,960 L605,990 M100,70 L200,75",
    teal: "M330,125 L310,165 C310,200 350,205 370,200 M415,165 L440,172 L455,210 M495,400 L505,430 L550,440 M475,630 L465,650",
  },
];

const STATIONS = [
  ["SCHÖNEBECK2", 602.7, 169, 609.5, 158],
  ["SCHÖNEBECK1", 664.7, 256, 626, 243.5],
  ["BARBY2", 796, 260, 803, 247.5],
  ["BARBY1", 815.7, 332, 823, 320.5],
  ["AKEN2", 903.7, 453, 911, 441],
  ["AKEN1", 998, 562, 1005, 550.5],
  ["ROSSLAU", 1193, 529, 1199, 516.5],
  ["DESSAU", 1177, 571, 1183, 559.5],
  ["VOCKERODE", 1320, 586, 1326, 574.5],
  ["COSWIG", 1428, 545, 1433.5, 533.5],
  ["WITTENBERG", 1635, 588, 1642, 575.5],
  ["ELSTER", 1829.7, 646, 1806.5, 634],
  ["PRETZSCH-MAUKEN", 1819.7, 838, 1662.5, 826.5],
];

function RiverMap() {
  return (
    <svg viewBox="481 115 1416 870" className="h-[870px] w-[1416px]">
      <defs>
        {/* grey level plus noise, mapped through the raster's colour ramp */}
        <filter id="raster" filterUnits="userSpaceOnUse" x="481" y="110" width="1420" height="880" colorInterpolationFilters="sRGB">
          <feTurbulence type="fractalNoise" baseFrequency="0.03" numOctaves="2" seed="8" result="warp" />
          <feTurbulence type="fractalNoise" baseFrequency="0.07" numOctaves="6" seed="3" result="n0" />
          <feDisplacementMap in="n0" in2="warp" scale="60" xChannelSelector="R" yChannelSelector="G" result="n1" />
          <feColorMatrix in="n1" type="matrix" values="1.8 0 0 0 -0.68  1.8 0 0 0 -0.68  1.8 0 0 0 -0.68  0 0 0 0 1" result="coarse" />
          <feTurbulence type="fractalNoise" baseFrequency="0.45" numOctaves="2" seed="12" result="f0" />
          <feColorMatrix in="f0" type="matrix" values="1.4 0 0 0 -0.55  1.4 0 0 0 -0.55  1.4 0 0 0 -0.55  0 0 0 0 1" result="fine" />
          <feComposite in="coarse" in2="fine" operator="arithmetic" k1="0" k2="0.7" k3="0.5" k4="0" result="noise" />
          <feTurbulence type="fractalNoise" baseFrequency="0.3" numOctaves="1" seed="5" result="edge" />
          <feDisplacementMap in="SourceGraphic" in2="edge" scale="4" xChannelSelector="R" yChannelSelector="G" result="shape" />
          <feComposite in="shape" in2="noise" operator="arithmetic" k1="0" k2="1" k3="0.8" k4="0" result="sum" />
          <feComponentTransfer in="sum" result="ramp">
            <feFuncR type="table" tableValues="0.75 0.76 0.78 0.82 0.88 0.94 0.96 0.98 1 0.5 0.1" />
            <feFuncG type="table" tableValues="0.31 0.32 0.35 0.43 0.54 0.66 0.74 0.86 1 0.93 0.75" />
            <feFuncB type="table" tableValues="0.22 0.22 0.20 0.17 0.12 0.06 0.04 0.02 0 0 0.25" />
          </feComponentTransfer>
          <feComposite in="ramp" in2="shape" operator="in" result="cut" />
          <feComponentTransfer in="cut">
            <feFuncA type="discrete" tableValues="0 1" />
          </feComponentTransfer>
        </filter>
      </defs>
      <g filter="url(#raster)">
        {SECTIONS.map((s) => (
          <g key={s.t} transform={s.t} fill="none">
            <polygon points={s.land} fill={s.tone} stroke="#000" strokeWidth="5" />
            <path d={s.low} stroke="#000" strokeWidth="26" opacity=".65" />
            <path d={s.bright} stroke="#707070" strokeWidth="22" opacity=".4" />
            <path d={s.bright} stroke="#747474" strokeWidth="5" />
          </g>
        ))}
      </g>
      {SECTIONS.map((s) => (
        <g key={s.t} transform={s.t} fill="none" strokeLinejoin="round">
          <path d={s.green} stroke="#2ade10" strokeWidth="4" strokeDasharray="14 4" />
          <path d={s.teal} stroke="#1ca67c" strokeWidth="7" strokeDasharray="12 3" />
          <path d={s.river} stroke="#e0b828" strokeWidth={s.w + 5} strokeDasharray="3 6" />
          <path d={s.river} stroke="#2aa05c" strokeWidth={s.w + 4} strokeDasharray="3 17" />
          <path d={s.river} stroke="#0b2f78" strokeWidth={s.w} />
        </g>
      ))}
      {STATIONS.map(([n, x, y]) => (
        <circle key={n} cx={x} cy={y} r="6.400" fill="#ffff00" stroke="#000" strokeWidth="2.200" />
      ))}
      <g className="font-['Liberation_Sans',Arial,sans-serif] text-[23.300px]" fill="#000">
        {STATIONS.map(([n, , , x, y]) => (
          <text key={n} x={x} y={y}>
            {n}
          </text>
        ))}
      </g>
    </svg>
  );
}

function MapPane() {
  return (
    <div className="ml-1 flex min-w-0 flex-1 flex-col">
      <div className="flex h-[873px] shrink-0">
        <div className="w-[1419px] shrink-0 overflow-hidden border-b border-l-2 border-r border-t-2 border-b-[#e0e0e0] border-l-[#6d6d6d] border-r-[#e0e0e0] border-t-[#6d6d6d] bg-[#fefefe]">
          <RiverMap />
        </div>
        <div className="flex w-[19px] flex-col items-center border-t-2 border-[#6d6d6d] bg-[#f0f0f0]">
          <div className="flex h-[21px] items-center">
            <Tri dir="up" />
          </div>
          <div className="mt-[336px] flex h-[42px] w-[18px] flex-col items-center justify-center gap-[3px] border border-[#979797] bg-gradient-to-r from-[#f5f5f5] via-[#e0e0e2] to-[#c9cace]">
            <div className="h-px w-2 bg-[#444]" />
            <div className="h-px w-2 bg-[#444]" />
            <div className="h-px w-2 bg-[#444]" />
          </div>
          <div className="mb-[7px] mt-auto">
            <Tri dir="down" />
          </div>
        </div>
      </div>
      <div className="flex h-5 w-[1418px] items-center bg-[#f0f0f0] pb-px">
        <div className="ml-[3px] flex h-[18px] w-5 items-center justify-center rounded-sm border border-[#666] bg-[#e4e4e4]">
          <svg viewBox="0 0 8 9" className="h-[9px] w-2">
            <rect x=".5" y=".5" width="7" height="8" fill="#c8dc8c" stroke="#333" />
            <path d="M4 4l3-3v3L4 8z" fill="#6fa8a0" />
          </svg>
        </div>
        <svg viewBox="0 0 8 9" className="ml-[6px] h-[9px] w-2">
          <path d="M.5.5h5l2 2v6h-7z" fill="#fff" stroke="#333" />
          <path d="M2 3.500h3M2 6h4" stroke="#2f62b8" />
        </svg>
        <div className="ml-[9px] h-[17px] w-px bg-[#999]" />
        <svg viewBox="0 0 9 9" className="ml-[10px] h-[9px] w-[9px]">
          <path d="M1 4C1.500 1 6 0 7.500 3M8 5C7.500 8 3 9 1.500 6" fill="none" stroke="#1a56a0" strokeWidth="1.300" />
          <path d="M9 .5V4H5.500zM0 8.500V5h3.500z" fill="#1a56a0" />
        </svg>
        <svg viewBox="0 0 7 7" className="ml-[13px] h-[7px] w-[7px]">
          <path d="M1.500 0v7M5.500 0v7" stroke="#1d55b8" strokeWidth="2" />
        </svg>
        <Tri dir="left" className="ml-[13px]" />
        <div className="ml-[801px] flex h-[18px] w-[131px] items-center justify-center gap-[3px] border border-[#979797] bg-gradient-to-b from-[#f5f5f5] via-[#e0e0e2] to-[#c9cace]">
          <div className="h-2 w-px bg-[#444]" />
          <div className="h-2 w-px bg-[#444]" />
          <div className="h-2 w-px bg-[#444]" />
        </div>
        <Tri dir="right" className="ml-auto mr-[7px]" />
      </div>
    </div>
  );
}

export default function App() {
  return (
    <div className="flex h-[1032px] w-[1920px] flex-col overflow-hidden bg-[#f0f0f0] font-['Open_Sans','Noto_Sans',sans-serif] text-black">
      <TitleBar />
      <Toolbars />
      <div className="flex h-[893px] shrink-0">
        <Contents />
        <MapPane />
      </div>
      <div className="flex min-h-0 flex-1 items-center justify-end border-t border-[#fafafa] pr-[104px] pt-[4px] text-[14.500px] tracking-[-0.25px]">
        <span className="whitespace-pre">265503,522  5758746,667 Meters</span>
      </div>
    </div>
  );
}
